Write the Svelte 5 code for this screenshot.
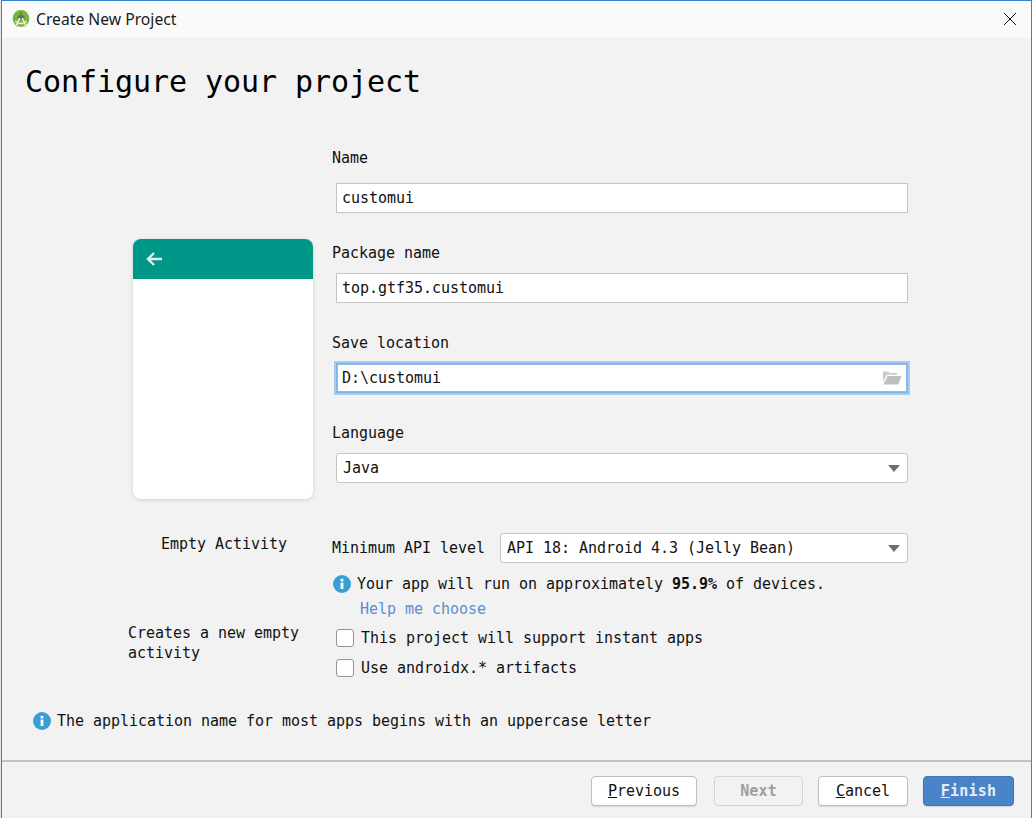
<script>
  const fields = [
    { label: 'Name', value: 'customui', cls: 'name' },
    { label: 'Package name', value: 'top.gtf35.customui', cls: 'pkg' },
  ];
</script>

<div class="window">
  <header class="titlebar">
    <svg class="logo" width="18" height="18" viewBox="0 0 18 18" aria-hidden="true">
      <circle cx="9" cy="8.5" r="8.4" fill="#78b23f" />
      <path d="M2 11.5a8.4 8.4 0 0 0 14 0z" fill="#8fc152" />
      <path d="M5.4 8.6a3.6 3.6 0 0 1 7.2 0z" fill="#5f6f58" />
      <rect x="8.2" y="2.6" width="1.6" height="2.2" fill="#5f6f58" />
      <path d="M7.6 8 4.4 15.4M10.4 8l3.2 7.4" stroke="#eef2e6" stroke-width="1.4" fill="none" />
      <path d="M3.2 11.2q5.8 4.8 11.6 0" stroke="#eef2e6" stroke-width="1.1" fill="none" />
      <path d="M3.8 16.2l1.2.8M14.2 16.2l-1.2.8" stroke="#b9c4a8" stroke-width="1" fill="none" />
    </svg>
    <span class="wintitle">Create New Project</span>
    <svg class="close" width="14" height="14" viewBox="0 0 14 14" aria-hidden="true">
      <path d="M1 1l12 12M13 1L1 13" stroke="#111" stroke-width="1" fill="none" />
    </svg>
  </header>

  <main class="main">
    <h1>Configure your project</h1>

    <div class="columns">
      <aside class="side">
        <div class="card">
          <div class="appbar">
            <svg width="18" height="18" viewBox="0 0 18 18" aria-hidden="true">
              <path d="M17 9H3M9 3 3 9l6 6" stroke="#e3f2f0" stroke-width="2.4" fill="none" />
            </svg>
          </div>
        </div>
        <div class="tname">Empty Activity</div>
        <div class="tdesc">Creates a new empty<br />activity</div>
      </aside>

      <section class="form">
        {#each fields as f}
          <div class="label {f.cls}">{f.label}</div>
          <div class="input {f.cls}">{f.value}</div>
        {/each}

        <div class="label save">Save location</div>
        <div class="input focus">
          <span>D:\customui</span>
          <svg class="folder" width="20" height="16" viewBox="0 0 20 16" aria-hidden="true">
            <path d="M1 1.5h5.5l1.5 1.5h7v1.8H5L1 12z" fill="#c9cccf" />
            <path d="M5.6 6H19.4l-3 8.6H1.4z" fill="#bcc0c3" />
          </svg>
        </div>

        <div class="label lang">Language</div>
        <div class="input select">
          <span>Java</span>
          <span class="caret"></span>
        </div>

        <div class="api">
          <span class="apilabel">Minimum API level</span>
          <div class="input select apisel">
            <span>API 18: Android 4.3 (Jelly Bean)</span>
            <span class="caret"></span>
          </div>
        </div>

        <div class="info inforow">
          <svg width="18" height="18" viewBox="0 0 18 18" aria-hidden="true">
            <circle cx="9" cy="9" r="9" fill="#389fd6" />
            <rect x="7.6" y="7.6" width="2.8" height="6.4" fill="#fff" />
            <rect x="7.6" y="3.8" width="2.8" height="2.6" fill="#fff" />
          </svg>
          <span>Your app will run on approximately <b>95.9%</b> of devices.</span>
        </div>
        <div class="help">Help me choose</div>

        <label class="check first"><span class="box"></span>This project will support instant apps</label>
        <label class="check"><span class="box"></span>Use androidx.* artifacts</label>
      </section>
    </div>

    <div class="info message">
      <svg width="18" height="18" viewBox="0 0 18 18" aria-hidden="true">
        <circle cx="9" cy="9" r="9" fill="#389fd6" />
        <rect x="7.6" y="7.6" width="2.8" height="6.4" fill="#fff" />
        <rect x="7.6" y="3.8" width="2.8" height="2.6" fill="#fff" />
      </svg>
      <span>The application name for most apps begins with an uppercase letter</span>
    </div>
  </main>

  <footer class="footer">
    <button class="btn prev"><u>P</u>revious</button>
    <button class="btn next" disabled>Next</button>
    <button class="btn cancel"><u>C</u>ancel</button>
    <button class="btn finish"><u>F</u>inish</button>
  </footer>
</div>

<style>
  :global(body) {
    margin: 0;
    background: #e4e4e4;
  }
  .window {
    box-sizing: border-box;
    width: 1031px;
    height: 818px;
    margin-left: 1px;
    display: flex;
    flex-direction: column;
    border: 1px solid #2f86d2;
    border-width: 1px 1px 0 1px;
    background: #f2f2f2;
    font: 15px/20px "DejaVu Sans Mono", monospace;
    letter-spacing: -0.03px;
    color: #111;
    overflow: hidden;
  }
  .titlebar {
    height: 37px;
    box-sizing: border-box;
    flex: none;
    display: flex;
    align-items: center;
    background: #fafafa;
    padding: 0 14px 2px 10px;
  }
  .wintitle {
    margin-left: 6px;
    font: 15.7px/20px "Noto Sans", sans-serif;
    letter-spacing: 0;
    color: #1a1a1a;
  }
  .close {
    margin-left: auto;
  }
  .main {
    flex: 1;
    min-height: 0;
    padding-left: 23px;
    border-bottom: 2px solid #c2c2c2;
  }
  h1 {
    margin: 0;
    padding-top: 24px;
    font: 400 30px/40px "DejaVu Sans Mono", monospace;
    letter-spacing: -0.06px;
    color: #000;
    height: 40px;
  }
  .columns {
    display: flex;
    height: 609px;
  }
  .side {
    width: 307px;
    flex: none;
    padding-top: 137px;
  }
  .card {
    margin-left: 108px;
    width: 180px;
    height: 260px;
    border-radius: 8px;
    background: #fff;
    box-shadow: 0 1px 4px rgba(0, 0, 0, 0.14);
    overflow: hidden;
  }
  .appbar {
    height: 40px;
    background: #009688;
    display: flex;
    align-items: center;
    padding-left: 12px;
  }
  .tname {
    margin-top: 35px;
    margin-left: 136px;
    width: 126px;
    white-space: nowrap;
  }
  .tdesc {
    margin-top: 69px;
    margin-left: 103px;
    white-space: nowrap;
  }
  .form {
    width: 580px;
    padding-top: 46px;
  }
  .label {
    height: 20px;
    line-height: 20px;
  }
  .input {
    box-sizing: border-box;
    width: 572px;
    height: 30px;
    margin-left: 4px;
    background: #fff;
    border: 1px solid #c4c4c4;
    padding: 0 5px;
    line-height: 28px;
    display: flex;
    align-items: center;
    justify-content: space-between;
    margin-top: 10px;
    color: #111;
  }
  .input.name {
    margin-top: 15px;
  }
  .label.pkg,
  .label.save,
  .label.lang {
    margin-top: 30px;
  }
  .input.focus {
    border: 1px solid #7eb2e8;
    outline: 2px solid #a8cbf0;
    outline-offset: 0;
    box-shadow: inset 0 0 0 1px #8fbcec;
  }
  .input.select {
    border-radius: 3px;
    padding-left: 6px;
    padding-right: 7px;
  }
  .caret {
    width: 0;
    height: 0;
    border-left: 6px solid transparent;
    border-right: 6px solid transparent;
    border-top: 7px solid #6e6e6e;
  }
  .api {
    display: flex;
    align-items: center;
    margin-top: 50px;
  }
  .apilabel {
    width: 168px;
    white-space: nowrap;
  }
  .input.apisel {
    width: 408px;
    margin: 0;
  }
  .info {
    display: flex;
    align-items: center;
    gap: 6px;
    white-space: nowrap;
  }
  .inforow {
    margin-top: 11px;
    margin-left: 1px;
    height: 20px;
  }
  .info b {
    font-weight: 700;
  }
  .help {
    margin-left: 28px;
    margin-top: 5px;
    color: #5a8ed0;
  }
  .check {
    display: flex;
    align-items: center;
    gap: 7px;
    height: 20px;
    margin-left: 4px;
    margin-top: 10px;
    white-space: nowrap;
  }
  .check.first {
    margin-top: 9px;
  }
  .box {
    box-sizing: border-box;
    width: 18px;
    height: 18px;
    background: #fff;
    border: 1px solid #959595;
    border-radius: 3px;
  }
  .message {
    margin-left: 8px;
  }
  .footer {
    flex: none;
    height: 56px;
    box-sizing: border-box;
    display: flex;
    align-items: flex-start;
    padding: 14px 17px 0 0;
    justify-content: flex-end;
    gap: 15px;
  }
  .btn {
    box-sizing: border-box;
    height: 30px;
    font: 15px/20px "DejaVu Sans Mono", monospace;
    letter-spacing: -0.03px;
    color: #111;
    background: #fff;
    border: 1px solid #bdbdbd;
    border-radius: 4px;
    padding: 0;
    box-shadow: 0 1px 1px rgba(0, 0, 0, 0.12);
  }
  .prev {
    width: 106px;
    margin-right: 2px;
  }
  .next {
    width: 89px;
    background: #f2f2f2;
    border-color: #d4d4d4;
    color: #9e9e9e;
    font-weight: 700;
    letter-spacing: 0.1px;
    box-shadow: none;
  }
  .cancel {
    width: 90px;
  }
  .finish {
    width: 91px;
    background: #4a84c8;
    border-color: #3f76b6;
    color: #e6eef8;
    font-weight: 700;
    letter-spacing: 0.2px;
  }
</style>
